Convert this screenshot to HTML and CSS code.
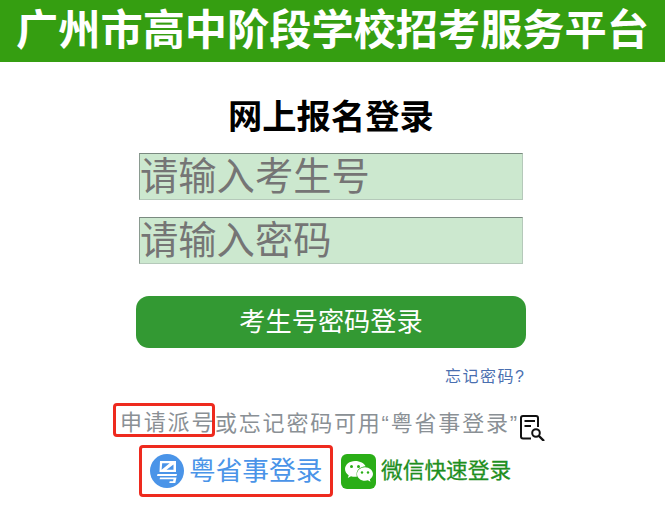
FILE: index.html
```html
<!DOCTYPE html>
<html lang="zh-CN">
<head>
<meta charset="utf-8">
<title>广州市高中阶段学校招考服务平台</title>
<link rel="stylesheet" href="styles.css">
</head>
<body>
<header class="banner"><h1>广州市高中阶段学校招考服务平台</h1></header>
<main class="login">
  <h2 class="title">网上报名登录</h2>
  <input class="field" type="text" placeholder="请输入考生号">
  <input class="field" type="password" placeholder="请输入密码">
  <button class="submit" type="button">考生号密码登录</button>
  <a class="forgot" href="#">忘记密码?</a>
  <div class="hint">
    <span class="mark">申请派号</span><span class="hint-text">或忘记密码可用“粤省事登录”</span>
    <svg class="doc-icon" viewBox="0 0 26 26" width="26" height="26" aria-hidden="true">
      <path d="M12 23.500H4a2 2 0 0 1-2-2V3a2 2 0 0 1 2-2h13a2 2 0 0 1 2 2v9" fill="none" stroke="#111" stroke-width="2"/>
      <path d="M5.500 6h10.500M5.500 11h6.500" fill="none" stroke="#111" stroke-width="2"/>
      <circle cx="17" cy="18" r="3.800" fill="#fff" stroke="#111" stroke-width="2"/>
      <path d="M20 21l5 5" stroke="#111" stroke-width="2.400"/>
    </svg>
  </div>
  <div class="quick">
    <a class="yss" href="#">
      <svg class="yss-icon" viewBox="0 0 34 34" width="34" height="34" aria-hidden="true">
        <circle cx="17" cy="17" r="17" fill="#4a94e8"/>
        <path d="M10 7h16v11H9.500zM12.200 9.200l-.6 6.600 8-6.600zM23.500 10.500l-7 5.300h7z" fill="#fff" fill-rule="evenodd"/>
        <path d="M7.500 20h19.500l-.5 2H7z" fill="#fff"/>
        <path d="M10 23.500h16.500l-1.200 5.500h-6l.4-1.800h3.400l.4-1.900H9.600z" fill="#fff"/>
      </svg>
      <span>粤省事登录</span>
    </a>
    <a class="wechat" href="#">
      <svg class="wx-icon" viewBox="0 0 35 35" width="35" height="35" aria-hidden="true">
        <rect width="35" height="35" rx="6" fill="#2aae17"/>
        <path d="M14 7C8.500 7 4 10.600 4 15c0 2.500 1.400 4.700 3.700 6.200L6.800 24l3.200-1.800c1.200.4 2.600.6 4 .6.700 0 1.300 0 2-.2-.3-.8-.4-1.600-.4-2.400 0-4.400 4-7.800 9-7.900C23.400 9.300 19.100 7 14 7z" fill="#fff"/>
        <path d="M32 20c0-3.800-3.700-6.800-8-6.800s-8 3-8 6.800 3.700 6.800 8 6.800c1 0 2-.2 2.900-.5l2.600 1.500-.7-2.400C30.600 24.100 32 22.200 32 20z" fill="#fff"/>
        <circle cx="10.500" cy="12.500" r="1.500" fill="#2aae17"/>
        <circle cx="17.500" cy="12.500" r="1.500" fill="#2aae17"/>
        <circle cx="21" cy="18.500" r="1.200" fill="#2aae17"/>
        <circle cx="27" cy="18.500" r="1.200" fill="#2aae17"/>
      </svg>
      <span>微信快速登录</span>
    </a>
  </div>
</main>
</body>
</html>
```
FILE: styles.css
```css
* { box-sizing: border-box; }
html, body { margin: 0; padding: 0; background: #fff; }
body { font-family: "Liberation Sans", "Noto Sans CJK SC", sans-serif; }

.banner {
  height: 62px;
  background: #359e11;
  display: flex;
  align-items: center;
  justify-content: center;
}
.banner h1 {
  margin: 0 0 1px;
  color: #fff;
  font-size: 42.200px;
  line-height: 60px;
  font-weight: 700;
  white-space: nowrap;
}

.login {
  display: flex;
  flex-direction: column;
  align-items: flex-start;
  padding-left: 139px;
}
.title {
  margin: 34px 0 0 89px;
  font-size: 34.300px;
  line-height: 42px;
  font-weight: 700;
  color: #000;
}
.field {
  display: block;
  width: 384px;
  height: 47px;
  margin: 15px 0 0;
  padding: 0;
  background: #cce8cf;
  border: 0;
  border-top: 1px solid #7a8a80;
  border-left: 1px solid #8a9a90;
  border-right: 1px solid #b5c9ba;
  border-bottom: 1px solid #b5c9ba;
  border-radius: 0;
  font-family: inherit;
  font-size: 38.300px;
  color: #757575;
  outline: none;
}
.field + .field { margin-top: 17px; }
.field::placeholder { color: #757575; opacity: 1; }

.submit {
  width: 390px;
  height: 52px;
  margin: 32px 0 0 -3px;
  background: #339933;
  border: 0;
  border-radius: 13px;
  color: #fff;
  font-family: inherit;
  font-size: 26.200px;
  line-height: 50px;
  padding: 0;
}
.forgot {
  margin: 17px 0 0 306px;
  font-size: 16px;
  line-height: 24px;
  letter-spacing: 1.500px;
  color: #4a6fb0;
  text-decoration: none;
  white-space: nowrap;
}

.hint {
  display: flex;
  align-items: center;
  height: 34px;
  margin: 14px 0 0 -26px;
  color: #8a9095;
  font-size: 22px;
  letter-spacing: 1.800px;
  white-space: nowrap;
}
.mark {
  display: block;
  width: 102px;
  height: 34px;
  padding-left: 4px;
  border: 3px solid #ee2a1e;
  border-radius: 4px;
  line-height: 33px;
}
.hint-text { padding-top: 1px; }
.doc-icon { flex: none; margin: 16px 0 0 0; }

.quick {
  display: flex;
  align-items: center;
  margin-top: 8px;
}
.yss {
  display: flex;
  align-items: center;
  width: 194px;
  height: 52px;
  padding-left: 8px;
  border: 3px solid #ee2a1e;
  border-radius: 4px;
  color: #4a94e8;
  font-size: 26.700px;
  text-decoration: none;
  white-space: nowrap;
}
.yss-icon { flex: none; margin-right: 5px; }
.yss span { margin-top: -6px; }
.wechat {
  display: flex;
  align-items: center;
  margin-left: 8px;
  color: #1f8f1f;
  font-size: 21.700px;
  -webkit-text-stroke: 0.3px #1f8f1f;
  text-decoration: none;
  white-space: nowrap;
}
.wx-icon { flex: none; margin-right: 5px; }
.wechat span { margin-top: -6px; }
```
